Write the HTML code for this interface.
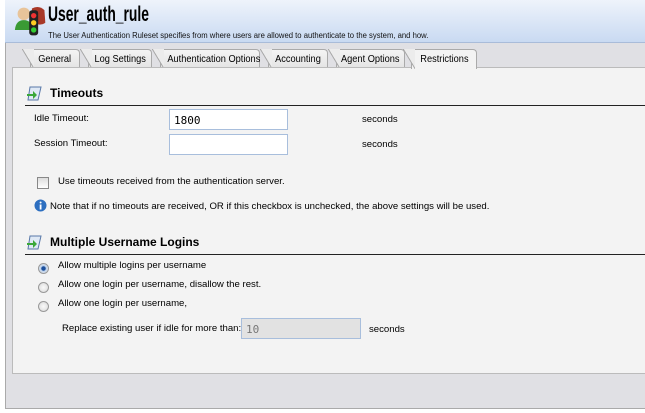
<!DOCTYPE html>
<html><head><meta charset="utf-8"><style>
*{margin:0;padding:0;box-sizing:border-box}
body{width:645px;height:413px;background:#fff;font-family:"Liberation Sans",Arial,sans-serif;position:relative;overflow:hidden;color:#000}
.a{position:absolute;white-space:nowrap}
#outer{left:5px;top:0;width:650px;height:409px;background:#e0e0e4;border-left:1px solid #aaa;border-bottom:1px solid #aaa}
#hdr{left:5px;top:0;width:645px;height:43px;background:linear-gradient(#eef3fb,#c9daf2);border-bottom:1px solid #a9bcd9}
#title{left:48px;top:3px;font-size:21px;font-weight:bold;transform:scaleX(0.66);transform-origin:left}
#sub{left:48px;top:31px;font-size:8px;color:#111;transform:scaleX(0.96);transform-origin:left}
.tab{position:absolute;top:49px;height:19px;background:linear-gradient(#f4f4f4,#e4e4e4);border:1px solid #aaa;border-bottom:none;font-size:10.5px;text-align:center;line-height:18px;border-radius:0 4px 0 0;white-space:nowrap}
.tab span{display:inline-block;transform:scaleX(0.88)}
.tab:before{content:"";position:absolute;left:-9px;top:-1px;width:12px;height:20px;background:linear-gradient(to top right,transparent 48%,#aaa 49%,#aaa 53%,#ececec 54%)}
#panel{left:12px;top:67px;width:640px;height:307px;background:#f3f3f3;border:1px solid #bbb}
.h{font-size:12px;font-weight:bold}
.line{height:1px;background:#222;left:25px;width:625px}
.lbl{font-size:9.6px}
.inp{background:#fff;border:1px solid #a8bedc;height:21px;width:119px;font-size:11px;padding:4px 4px;font-family:"DejaVu Sans Mono","Liberation Mono",monospace}
.rad{width:11px;height:11px;border-radius:50%;border:1px solid #999;background:radial-gradient(#fafafa,#d8d8d8)}
</style></head><body>
<div class="a" id="outer"></div>
<div class="a" id="hdr"></div>
<svg class="a" style="left:14px;top:3px" width="34" height="36" viewBox="0 0 38 36">
<circle cx="11" cy="10" r="7" fill="#e8c49a"/><path d="M1 28 Q2 17 11 17 Q20 17 21 28Z" fill="#3a9a34"/>
<path d="M20 4 Q28 0 34 6 L35 20 Q30 24 20 20Z" fill="#a83828"/>
<rect x="17" y="6" width="10" height="28" rx="3" fill="#222"/>
<circle cx="22" cy="12" r="3" fill="#e33"/><circle cx="22" cy="20" r="3" fill="#fc2"/><circle cx="22" cy="28" r="3" fill="#3c3"/>
</svg>
<div class="a" id="title">User_auth_rule</div>
<div class="a" id="sub">The User Authentication Ruleset specifies from where users are allowed to authenticate to the system, and how.</div>

<div class="tab" style="left:30px;width:50px"><span>General</span></div>
<div class="tab" style="left:88px;width:64px"><span>Log Settings</span></div>
<div class="tab" style="left:160px;width:100px"><span>Authentication Options</span></div>
<div class="tab" style="left:268px;width:60px"><span>Accounting</span></div>
<div class="tab" style="left:336px;width:69px"><span>Agent Options</span></div>
<div class="a" id="panel"></div>
<div class="tab" style="left:411px;width:66px;background:#f3f3f3;height:20px;z-index:2"><span>Restrictions</span></div>

<svg class="a" style="left:26px;top:85px" width="17" height="16" viewBox="0 0 17 16"><path d="M4 2 H15 L12 15 H2Z" fill="#dfe9f5" stroke="#5878a8"/><path d="M1 9 H7 V6 L11 10 L7 14 V11 H1Z" fill="#3aa838"/></svg>
<div class="a h" style="left:50px;top:86px">Timeouts</div>
<div class="a line" style="top:105px"></div>
<div class="a lbl" style="left:34px;top:113px">Idle Timeout:</div>
<div class="a inp" style="left:169px;top:109px">1800</div>
<div class="a lbl" style="left:362px;top:114px">seconds</div>
<div class="a lbl" style="left:34px;top:138px">Session Timeout:</div>
<div class="a inp" style="left:169px;top:134px"></div>
<div class="a lbl" style="left:362px;top:139px">seconds</div>

<div class="a" style="left:37px;top:177px;width:12px;height:12px;border:1px solid #888;background:linear-gradient(#ddd,#fff)"></div>
<div class="a lbl" style="left:58px;top:176px">Use timeouts received from the authentication server.</div>
<svg class="a" style="left:34px;top:199px" width="13" height="13"><circle cx="6.5" cy="6.5" r="6" fill="#2d6fc0"/><rect x="5.7" y="5.5" width="1.8" height="5" fill="#fff"/><circle cx="6.6" cy="3.5" r="1" fill="#fff"/></svg>
<div class="a lbl" style="left:50px;top:201px">Note that if no timeouts are received, OR if this checkbox is unchecked, the above settings will be used.</div>

<svg class="a" style="left:26px;top:234px" width="17" height="16" viewBox="0 0 17 16"><path d="M4 2 H15 L12 15 H2Z" fill="#dfe9f5" stroke="#5878a8"/><path d="M1 9 H7 V6 L11 10 L7 14 V11 H1Z" fill="#3aa838"/></svg>
<div class="a h" style="left:50px;top:235px">Multiple Username Logins</div>
<div class="a line" style="top:254px"></div>
<div class="a rad" style="left:38px;top:263px;background:radial-gradient(#1c4f9c 30%,#bcd0ea 40%,#f0f0f0)"></div>
<div class="a lbl" style="left:58px;top:260px">Allow multiple logins per username</div>
<div class="a rad" style="left:38px;top:282px"></div>
<div class="a lbl" style="left:58px;top:279px">Allow one login per username, disallow the rest.</div>
<div class="a rad" style="left:38px;top:301px"></div>
<div class="a lbl" style="left:58px;top:298px">Allow one login per username,</div>
<div class="a lbl" style="left:62px;top:323px">Replace existing user if idle for more than:</div>
<div class="a inp" style="left:241px;top:318px;background:#e2e2e2;color:#777;width:120px">10</div>
<div class="a lbl" style="left:369px;top:324px">seconds</div>
</body></html>
